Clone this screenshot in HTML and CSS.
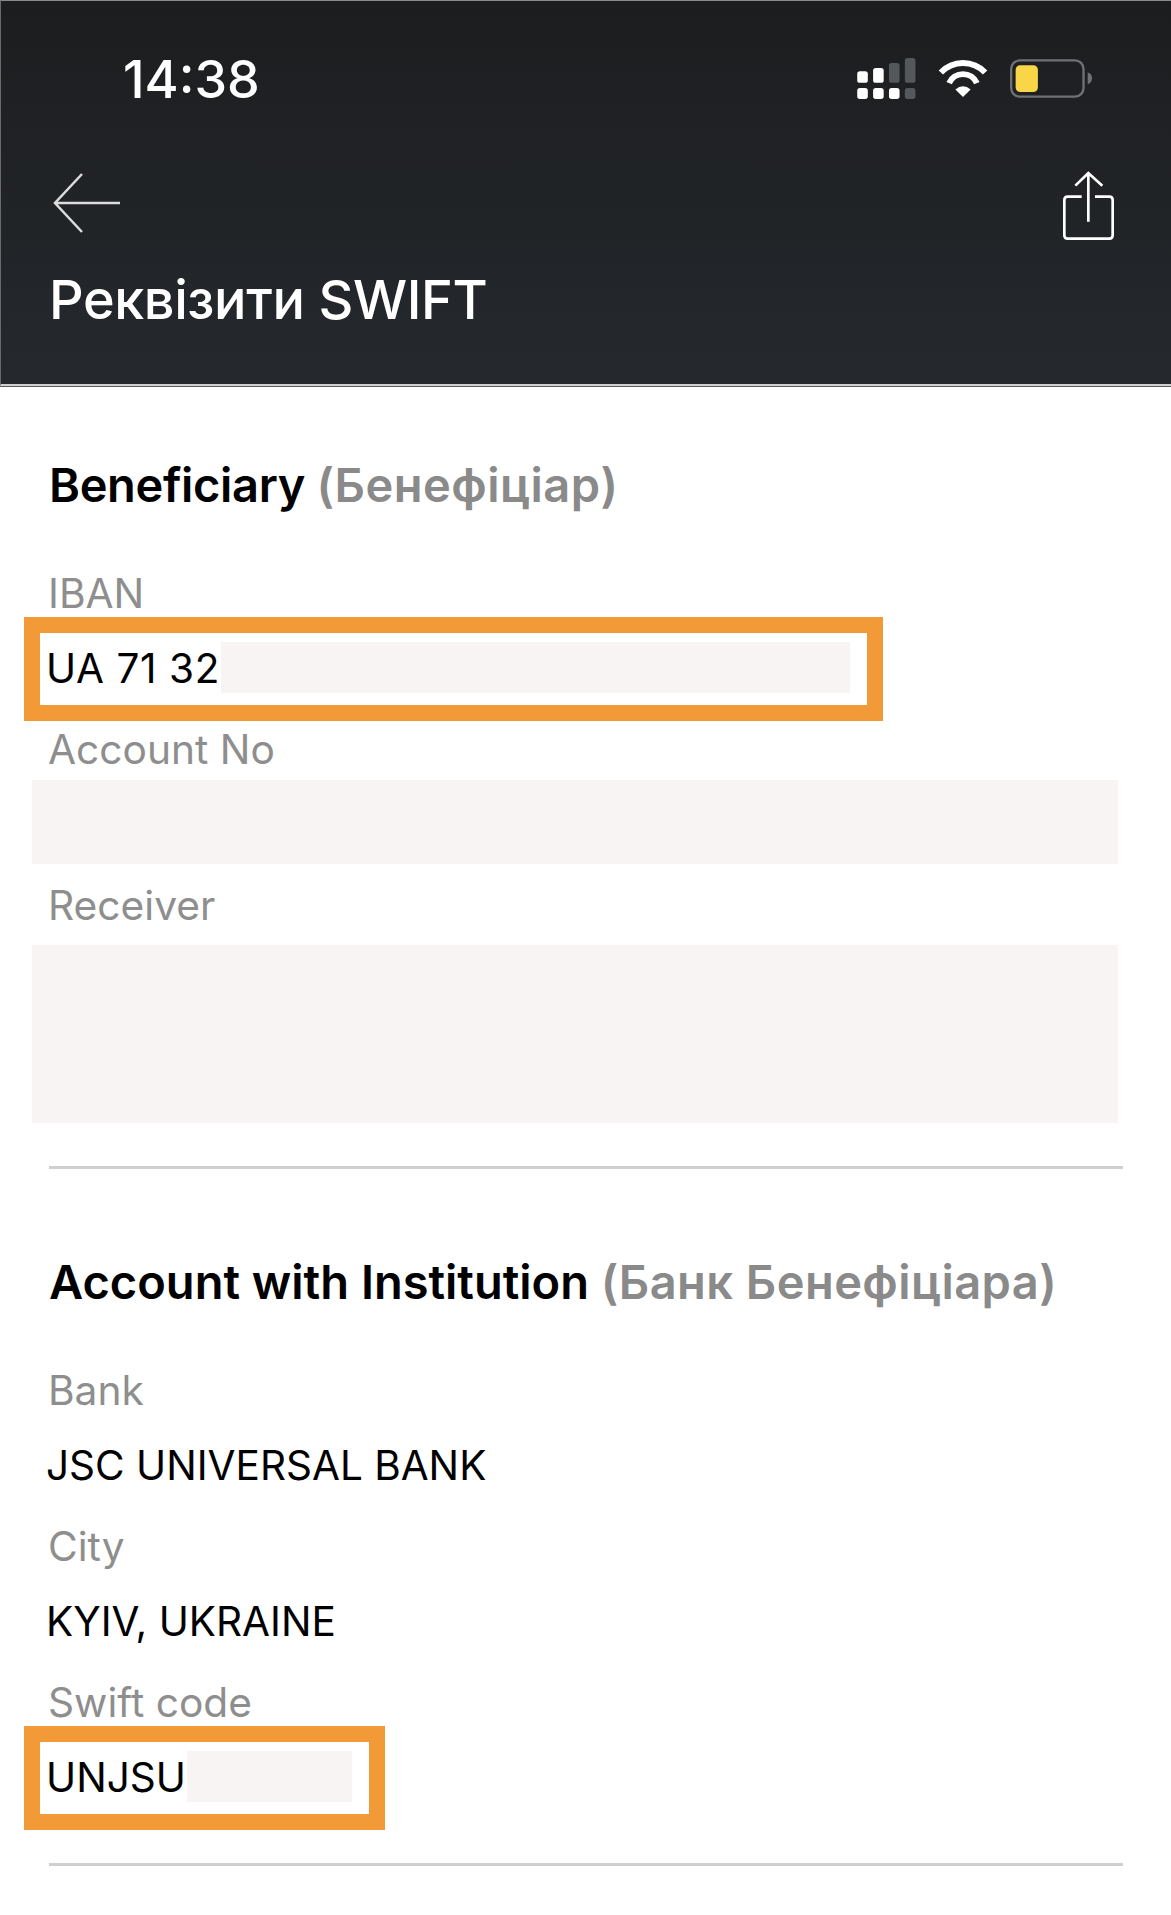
FILE: index.html
```html
<!DOCTYPE html>
<html lang="uk">
<head>
<meta charset="utf-8">
<title>Реквізити SWIFT</title>
<link rel="stylesheet" href="styles.css">
</head>
<body>
<header class="top">
  <div class="status">
    <span class="time">14:38</span>
    <div class="status-icons">
      <svg class="i-signal" viewBox="0 0 177 124"><g fill="#fff"><rect x="0" y="40" width="32" height="35" rx="8"/><rect x="48" y="30" width="32" height="45" rx="8"/><rect x="0" y="91" width="32" height="33" rx="8"/><rect x="48" y="91" width="32" height="33" rx="8"/><rect x="96" y="91" width="32" height="33" rx="8"/></g><g fill="#55585b"><rect x="96" y="15" width="32" height="60" rx="8"/><rect x="144" y="0" width="32" height="75" rx="8"/><rect x="144" y="91" width="32" height="33" rx="8"/></g></svg>
      <svg class="i-wifi" viewBox="0 0 150 112"><g fill="none" stroke="#fff" stroke-width="18"><path d="M8 38A92 92 0 0 1 142 38"/><path d="M33 70A46 46 0 0 1 117 70"/></g><path fill="#fff" d="M52 89Q75 70 98 89L75 112Z"/></svg>
      <svg class="i-battery" viewBox="0 0 250 116"><rect x="3.500" y="3.500" width="218" height="109" rx="26" fill="none" stroke="#6f7174" stroke-width="7"/><rect x="17" y="18" width="67" height="81" rx="14" fill="#f8d648"/><path d="M234 40Q247 44 247 57Q247 71 234 75Z" fill="#6f7174"/></svg>
    </div>
  </div>
  <div class="nav">
    <svg class="i-back" viewBox="0 0 67 60"><path d="M67 30H2M29 1L2 30L29 59" fill="none" stroke="#dcdcdc" stroke-width="2.500"/></svg>
    <svg class="i-share" viewBox="0 0 153 207"><path d="M56 77H14Q4 77 4 87V193Q4 203 14 203H139Q149 203 149 193V87Q149 77 139 77H96" fill="none" stroke="#fff" stroke-width="8"/><path d="M76 152V6M37 44L76 6L118 44" fill="none" stroke="#fff" stroke-width="8"/></svg>
  </div>
  <h1 class="title">Реквізити SWIFT</h1>
</header>
<main class="page">
  <section class="section">
    <h2 class="heading">Beneficiary <span class="heading-ua">(Бенефіціар)</span></h2>
    <div class="field">
      <div class="label">IBAN</div>
      <div class="value mark mark-iban"><span class="digits">UA 71 32</span><span class="hide hide-iban"></span></div>
    </div>
    <div class="field">
      <div class="label">Account No</div>
      <div class="block block-account"></div>
    </div>
    <div class="field">
      <div class="label">Receiver</div>
      <div class="block block-receiver"></div>
    </div>
  </section>
  <section class="section section-second">
    <h2 class="heading">Account with Institution <span class="heading-ua">(Банк Бенефіціара)</span></h2>
    <div class="field">
      <div class="label">Bank</div>
      <div class="value">JSC UNIVERSAL BANK</div>
    </div>
    <div class="field">
      <div class="label">City</div>
      <div class="value">KYIV, UKRAINE</div>
    </div>
    <div class="field">
      <div class="label">Swift code</div>
      <div class="value mark mark-swift">UNJSU<span class="hide hide-swift"></span></div>
    </div>
  </section>
</main>
</body>
</html>
```
FILE: styles.css
```css
* { box-sizing: border-box; }
html, body { margin: 0; padding: 0; background: #fff; }
body { width: 1171px; height: 1915px; overflow: hidden; font-family: Inter, "Noto Sans", sans-serif; }

.top {
  height: 386px;
  background: linear-gradient(180deg, #1c1d1f 0%, #25292d 100%);
  border-top: 1px solid #8a8a8a;
  border-left: 1px solid #6a6a6a;
  border-bottom: 2px solid #d0d0d0;
  box-shadow: 0 1px 0 #5a5a5a;
  color: #fff;
  display: flex;
  flex-direction: column;
}
.status {
  height: 60px;
  margin-top: 48px;
  padding-left: 122px;
  padding-right: 78px;
  display: flex;
  align-items: center;
  justify-content: space-between;
}
.time { font-size: 52px; font-weight: 500; letter-spacing: 0; }
.status-icons { display: flex; align-items: center; gap: 22px; margin-top: -2px; }
.i-signal { width: 59px; height: 41px; }
.i-wifi { width: 50px; height: 37px; }
.i-battery { width: 83px; height: 39px; margin-left: 0; }
.nav {
  height: 80px;
  margin-top: 55px;
  padding-left: 52px;
  padding-right: 57px;
  display: flex;
  align-items: center;
  justify-content: space-between;
}
.i-back { width: 67px; height: 60px; margin-top: -2px; }
.i-share { width: 51px; height: 69px; margin-top: 3px; }
.title {
  margin: 26px 0 0 48px;
  font-size: 54px;
  line-height: 60px;
  font-weight: 500;
  letter-spacing: -0.400px;
}

.page { padding: 1px 49px 0; }
.section { border-bottom: 3px solid #cfcfcf; width: 1074px; padding-bottom: 43px; }
.section-second { padding-bottom: 33px; }
.heading {
  margin: 0;
  padding-top: 68px;
  height: 178px;
  font-size: 47px;
  line-height: 60px;
  font-weight: 600;
  letter-spacing: -0.350px;
  color: #000;
}
.heading-ua { color: #8a8a8a; letter-spacing: 0.5px; }
.section-second .heading { height: 193px; padding-top: 83px; letter-spacing: 0; }
.section-second .heading-ua { letter-spacing: 0.450px; }
.label {
  height: 52px;
  margin-left: -1px;
  font-size: 40.700px;
  line-height: 57px;
  color: #8e8e8e;
}
.value {
  height: 104px;
  margin-left: -3px;
  font-size: 40.500px;
  line-height: 104px;
  color: #000;
}
.mark {
  display: flex;
  align-items: center;
  width: max-content;
  margin-left: -25px;
  padding-left: 6px;
  border: 16px solid #f39a38;
  line-height: 72px;
  background: #fff;
}
.digits { letter-spacing: 0.6px; }
.mark-iban { width: 859px; }
.mark-swift { width: 361px; }
.hide { display: block; height: 51px; margin-bottom: 3px; margin-left: 1px; background: #f7f4f3; }
.hide-iban { width: 629px; }
.hide-swift { width: 165px; }
.block { margin-left: -17px; background: #f7f4f3; width: 1086px; }
.block-account { height: 84px; margin-top: 7px; margin-bottom: 13px; }
.block-receiver { height: 178px; margin-top: 16px; }
```
